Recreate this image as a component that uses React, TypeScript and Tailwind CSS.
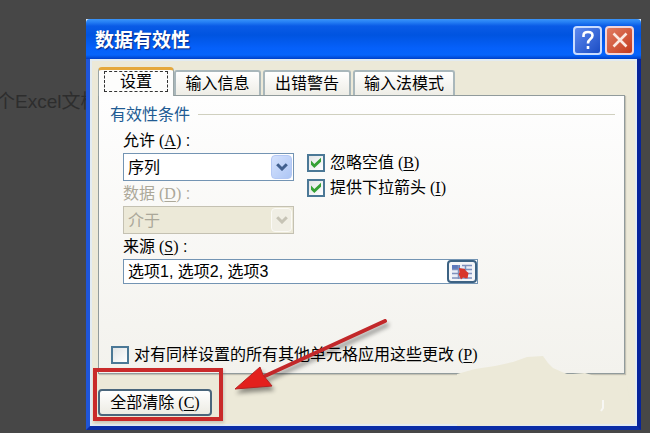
import { useState } from "react"
import type { ReactNode } from "react"

const tabs = [
  { label: "输入信息", width: "w-[87px]" },
  { label: "出错警告", width: "w-[88px]" },
  { label: "输入法模式", width: "w-[102px]" },
]

function Key({ children }: { children: string }) {
  return (
    <span className="ml-1 font-['Liberation_Serif','Noto_Sans_CJK_SC',serif] text-[16px]">
      (<span className="underline underline-offset-2">{children}</span>)
    </span>
  )
}

function CheckField({ id, initial, children }: { id: string; initial: boolean; children: ReactNode }) {
  const [checked, setChecked] = useState(initial)

  return (
    <div className="flex h-[25px] items-center gap-[5px]">
      <span className="grid shrink-0 place-items-center">
        <input
          id={id}
          type="checkbox"
          checked={checked}
          onChange={() => setChecked(!checked)}
          className="col-start-1 row-start-1 size-[18px] appearance-none border-2 border-[#4b7896] bg-gradient-to-br from-[#e2e5e6] to-white"
        />
        {checked && (
          <svg viewBox="0 0 12 12" className="pointer-events-none col-start-1 row-start-1 size-3">
            <path d="M1 3.500v4.200L4.300 11 11 4.800V.8L4.300 7z" fill="#35a135" />
          </svg>
        )}
      </span>
      <label htmlFor={id} className="whitespace-nowrap">
        {children}
      </label>
    </div>
  )
}

function SelectField({ id, value, disabled }: { id: string; value: string; disabled?: boolean }) {
  return (
    <div className="grid h-7 items-center">
      <select
        id={id}
        disabled={disabled}
        className={`col-start-1 row-start-1 h-7 w-full appearance-none border pl-1 opacity-100 outline-none ${
          disabled ? "border-[#c4c1b2] bg-[#ece9d8] text-[#aaa799]" : "border-[#7394b3] bg-white text-black"
        }`}
      >
        <option>{value}</option>
      </select>
      <span
        className={`pointer-events-none col-start-1 row-start-1 mr-[2px] grid h-6 w-[21px] place-items-center justify-self-end rounded-sm border ${
          disabled
            ? "border-[#fbfaf6] bg-[#f0eee4] text-[#c6c3b5]"
            : "border-[#b4c8f4] bg-gradient-to-br from-[#d5e2fd] to-[#adc6f5] text-[#41608f]"
        }`}
      >
        <svg viewBox="0 0 12 8" className="h-2 w-3" fill="none" stroke="currentColor" strokeWidth="3">
          <path d="M1.2 1.2 6 6l4.800-4.800" />
        </svg>
      </span>
    </div>
  )
}

function TitleBar() {
  return (
    <div className="bg-[#dbe8f8]">
      <header className="flex h-10 items-center justify-between rounded-t-[4px] bg-[linear-gradient(#3b94f8_0,#2680f4_3px,#0a5be6_7px,#0054e0_16px,#0560fa_29px,#0664fb_36px,#003fc7_40px)] pr-[7px] pl-[9px]">
        <h1 className="pt-1 text-[19px] leading-6 font-bold text-white [text-shadow:1px_1px_1px_#0b2a86]">
          数据有效性
        </h1>
        <div className="flex gap-[3px] pt-[2px]">
          <button
            type="button"
            aria-label="帮助"
            className="grid size-[29px] place-items-center rounded-[4px] border-2 border-[#c9dcff] bg-gradient-to-br from-[#5d88ee] to-[#1a4cc4]"
          >
            <svg viewBox="0 0 20 22" className="h-[22px] w-5" fill="none" stroke="#fff" strokeWidth="2.6">
              <path d="M5.500 8V6.500q0-3.500 4.500-3.500t4.500 3.500q0 2-2.300 3.700T10 14.500" />
              <path d="M10 17v3" />
            </svg>
          </button>
          <button
            type="button"
            aria-label="关闭"
            className="grid size-[29px] place-items-center rounded-[4px] border-2 border-[#f3d5d8] bg-gradient-to-br from-[#e07c62] to-[#c4391a]"
          >
            <svg viewBox="0 0 18 18" className="size-[18px]" stroke="#fbe9e2" strokeWidth="2.6">
              <path d="m2.500 2.500 13 13m0-13-13 13" />
            </svg>
          </button>
        </div>
      </header>
    </div>
  )
}

function RangeIcon() {
  return (
    <svg viewBox="0 0 22 16" className="h-4 w-[22px]">
      <path d="M1 1h20v14H1z" fill="#e9eef8" />
      <path d="M1 1h8v4H1z" fill="#5c78bd" />
      <path d="M1 5.500h20M1 9.500h20M1 14h20M11 1.500h10M7.500 1v14M14.500 1v14" stroke="#7f91bd" strokeWidth="1.500" />
      <path d="m8 4 6 1 .5 1.500 3 2.500-1 5.500-4.500-1-2 2-2.500-5.500 1-1.500z" fill="#d8352a" />
    </svg>
  )
}

export default function App() {
  return (
    <div className="relative flex min-h-screen items-start overflow-hidden bg-[#474747] pt-[19px] pr-[9px] font-['Liberation_Sans','Noto_Sans_CJK_SC',sans-serif] text-[16px] text-black">
      <p className="flex w-[86px] shrink-0 justify-start overflow-hidden pt-[69px] text-[19px] leading-7 whitespace-nowrap text-[#2d2d2d]">
        <span className="-ml-1">个Excel文档</span>
      </p>

      <main className="relative min-w-0 flex-1 border-x-4 border-b-4 border-l-[#1f55d8] border-r-[#06239a] border-b-[#0a2ca6] bg-[#ece9d8]">
        <div className="-mx-1">
          <TitleBar />
        </div>

        <div className="border-2 border-[#e2ebf2] pt-[6px] pr-[10px] pl-[6px]">
          <div role="tablist" className="flex items-end">
            <button
              type="button"
              role="tab"
              aria-selected="true"
              className="relative z-10 -mb-px h-[29px] w-[76px] rounded-t-[4px] border-x border-t-[3px] border-x-[#9aa5a6] border-t-[#e5a83c] bg-[#fdfdfc] px-[5px] pt-px pb-1"
            >
              <span className="block h-[21px] border border-dashed border-[#333] leading-5">设置</span>
            </button>
            <div className="flex gap-[2px]">
              {tabs.map((tab) => (
                <button
                  key={tab.label}
                  type="button"
                  role="tab"
                  aria-selected="false"
                  className={`h-[25px] rounded-t-[3px] border-2 border-b-0 border-[#a9b7bb] bg-gradient-to-b from-white to-[#eeede6] leading-5 whitespace-nowrap ${tab.width}`}
                >
                  {tab.label}
                </button>
              ))}
            </div>
          </div>

          <section className="border border-[#919b9c] bg-gradient-to-b from-[#fefefe] to-[#f3f2ed] pt-[6px] pb-[6px] leading-[25px] shadow-[1px_1px_1px_#c3c1b4]">
            <div className="flex items-center gap-2 pr-[9px] pl-[11px]">
              <h2 className="text-[#215b93]">有效性条件</h2>
              <span className="h-px flex-1 bg-[#d0d0bf]" />
            </div>

            <div className="mt-px pl-6">
              <div className="flex gap-[13px]">
                <div className="w-[171px]">
                  <label htmlFor="allow" className="block h-[25px]">
                    允许<Key>A</Key> :
                  </label>
                  <SelectField id="allow" value="序列" />
                  <label htmlFor="data" className="block h-[25px] text-[#aca899]">
                    数据<Key>D</Key> :
                  </label>
                  <SelectField id="data" value="介于" disabled />
                </div>
                <div className="pt-[22px]">
                  <CheckField id="ignore" initial>
                    忽略空值<Key>B</Key>
                  </CheckField>
                  <CheckField id="dropdown" initial>
                    提供下拉箭头<Key>I</Key>
                  </CheckField>
                </div>
              </div>

              <label htmlFor="source" className="block h-[25px]">
                来源<Key>S</Key> :
              </label>
              <div className="flex h-[25px] w-[355px] border border-[#7394b3] bg-white">
                <input
                  id="source"
                  type="text"
                  defaultValue="选项1, 选项2, 选项3"
                  className="min-w-0 flex-1 pl-1 outline-none"
                />
                <button
                  type="button"
                  aria-label="选择区域"
                  className="grid w-[30px] place-items-center rounded-[4px] border-2 border-[#3c6283] bg-[#f4f5f8]"
                >
                  <RangeIcon />
                </button>
              </div>
            </div>

            <div className="mt-[58px] pl-3">
              <CheckField id="apply" initial={false}>
                对有同样设置的所有其他单元格应用这些更改<Key>P</Key>
              </CheckField>
            </div>
          </section>

          <div className="pt-[15px] pb-2">
            <div className="relative z-10 w-fit">
              <button
                type="button"
                className="h-[27px] w-[114px] rounded-[4px] border-2 border-[#4a667c] bg-gradient-to-b from-white to-[#ecebe3] leading-5 whitespace-nowrap"
              >
                全部清除<Key>C</Key>
              </button>
              <span className="pointer-events-none absolute -top-[21px] -right-[11px] -bottom-[5px] -left-[5px] border-4 border-[#c92a2a] shadow-[1px_2px_3px_#7775]" />
            </div>
          </div>
        </div>

        {/* patch over the lower right corner */}
        <svg viewBox="0 0 180 70" className="pointer-events-none absolute right-[2px] bottom-0 h-[70px] w-[180px]">
          <path
            d="M2 18 20 13 40 10 58 6 72 1 88 0 93 7 98 12 107 16 112 18 118 18 130 17 143 21 158 22 172 30 176 50 168 64 130 68 20 70H2z"
            fill="#ece9d8"
          />
          <path d="M148 44v8l-2 3" fill="none" stroke="#f7f7f4" strokeWidth="2" />
        </svg>

        {/* arrow pointing at the clear button */}
        <svg
          viewBox="0 0 160 80"
          className="pointer-events-none absolute bottom-[32px] left-[143px] h-20 w-40 drop-shadow-[2px_4px_2px_#0006]"
        >
          <path d="M152 7 32 62" stroke="#c2282a" strokeWidth="4" strokeLinecap="round" />
          <path d="M2 75 27 53 30 61 39 72z" fill="#e3201d" stroke="#b52222" strokeWidth="1" />
        </svg>
      </main>
    </div>
  )
}
